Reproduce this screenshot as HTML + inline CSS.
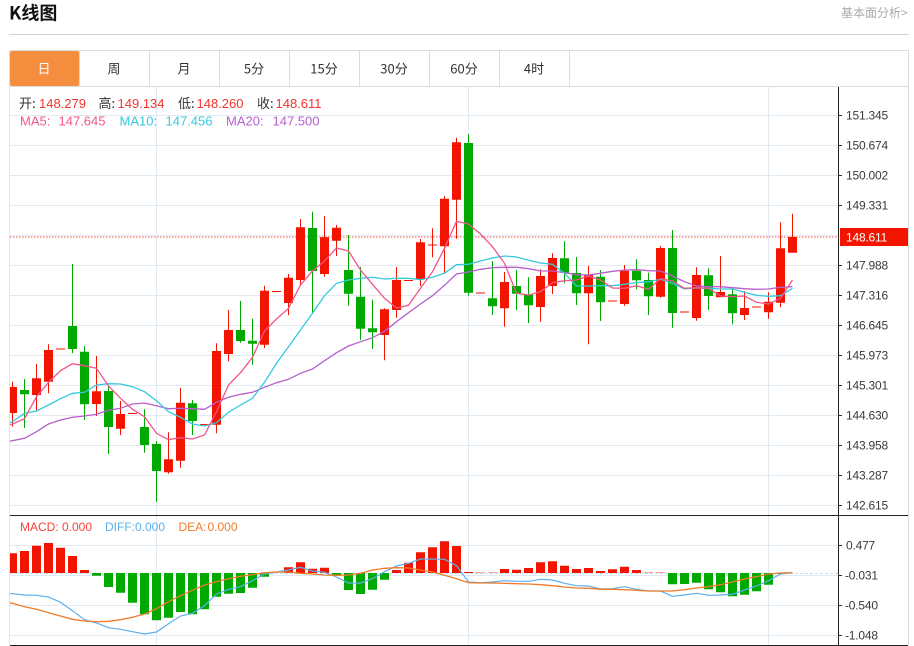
<!DOCTYPE html>
<html><head><meta charset="utf-8"><title>K线图</title>
<style>
html,body{margin:0;padding:0;background:#fff;width:914px;height:646px;overflow:hidden}
svg{display:block}
text{font-family:"Liberation Sans","Noto Sans CJK SC",sans-serif;font-size:13px}
.cjk{font-family:"Noto Sans CJK SC","Liberation Sans",sans-serif}
.ax text{font-size:12px;letter-spacing:-.2px;fill:#3a3a3a}
.m text{font-size:12px}
.l{fill:#333}.r{fill:#f4332b}
</style></head><body>
<svg width="914" height="646" viewBox="0 0 914 646" xmlns="http://www.w3.org/2000/svg">
<defs><clipPath id="c"><rect x="10" y="87" width="828" height="558"/></clipPath></defs>
<text x="9" y="19.5" class="cjk" style="font-size:18px;font-weight:700" fill="#111">K线图</text>
<text x="841" y="17" class="cjk" style="font-size:12px" fill="#a9a9a9">基本面分析&gt;</text>
<rect x="9" y="34" width="900" height="1" fill="#d2d2d2"/>
<!-- tabs -->
<path d="M9.5 50.5H908.5M9.5 86.5H908.5M9.5 50V645M908.5 50V645M149.5 50V86M219.5 50V86M289.5 50V86M359.5 50V86M429.5 50V86M499.5 50V86M569.5 50V86M79.5 50V86" stroke="#dcdcdc" fill="none"/>
<rect x="10" y="51" width="69" height="35" rx="2" fill="#f58d3f"/>
<g class="cjk" text-anchor="middle" fill="#333" style="font-size:13px">
<text x="44" y="73.7" class="cjk" fill="#fff">日</text>
<text x="114" y="73.7" class="cjk">周</text>
<text x="184" y="73.7" class="cjk">月</text>
<text x="254" y="73.7" class="cjk">5分</text>
<text x="324" y="73.7" class="cjk">15分</text>
<text x="394" y="73.7" class="cjk">30分</text>
<text x="464" y="73.7" class="cjk">60分</text>
<text x="534" y="73.7" class="cjk">4时</text>
</g>
<!-- grid -->
<path d="M10 115.5H838M10 145.5H838M10 175.5H838M10 205.5H838M10 235.5H838M10 265.5H838M10 295.5H838M10 325.5H838M10 355.5H838M10 385.5H838M10 415.5H838M10 445.5H838M10 475.5H838M10 505.5H838M10 545.5H838M10 575.5H838M10 605.5H838M10 635.5H838M156.5 87V645M468.5 87V645M768.5 87V645" stroke="#e1eaf2" fill="none"/>
<path d="M9.5 87V645" stroke="#dde5ec" fill="none"/>
<g clip-path="url(#c)">
<path d="M10 237H838" stroke="#f31400" stroke-opacity=".75" stroke-dasharray="1.5 1.5" fill="none"/>
<!-- red candles -->
<path fill="#f31400" d="M8 387h9V413h-9zM12 381.7h1V426.7h-1zM32 378.3h9V395h-9zM36 364h1V410.7h-1zM44 350h9V381.7h-9zM48 344.3h1V393.3h-1zM92 391.3h9V404h-9zM96 356h1V416h-1zM116 414h9V428.7h-9zM120 401h1V435h-1zM128 413h9V414h-9zM164 459.3h9V472.3h-9zM168 432.3h1V473.7h-1zM176 402.7h9V460.7h-9zM180 388h1V467.7h-1zM200 424h9V425h-9zM212 351h9V424.7h-9zM216 343.3h1V433.3h-1zM224 330h9V354h-9zM228 310h1V361.3h-1zM260 290.7h9V344.7h-9zM264 285.7h1V348h-1zM272 291h9V292h-9zM284 277.7h9V303h-9zM288 274h1V315.3h-1zM296 227.3h9V280h-9zM300 219h1V285h-1zM320 237.3h9V274h-9zM324 216h1V276.7h-1zM332 227.7h9V240.7h-9zM336 225h1V256h-1zM380 309.3h9V335h-9zM384 308.3h1V360.3h-1zM392 280h9V310h-9zM396 267h1V317.7h-1zM404 280h9V281h-9zM416 242.3h9V279h-9zM420 239h1V286h-1zM428 244.5h9V245.5h-9zM432 228.3h1V257.3h-1zM440 198.7h9V246.3h-9zM444 196h1V272.7h-1zM452 142.3h9V199.7h-9zM456 137.7h1V238.7h-1zM500 282h9V308.3h-9zM504 272h1V326.7h-1zM536 276h9V307h-9zM540 269.3h1V321.7h-1zM548 258h9V286h-9zM552 253.3h1V294h-1zM584 275h9V293.3h-9zM588 266h1V344.3h-1zM608 300.5h9V301.5h-9zM620 270.7h9V304h-9zM624 265h1V305.7h-1zM656 248h9V296.7h-9zM660 246h1V297.7h-1zM680 311.5h9V312.5h-9zM692 275h9V318h-9zM696 267.3h1V320.7h-1zM716 292h9V297.3h-9zM720 256h1V297.3h-1zM740 308h9V315h-9zM744 291.3h1V320h-1zM752 306.5h9V307.5h-9zM764 301.7h9V312.3h-9zM768 292.3h1V318.7h-1zM776 248.3h9V302.7h-9zM780 222.3h1V307.3h-1zM788 237h9V252.7h-9zM792 213.7h1V237h-1z"/>
<path fill="#f31400" fill-opacity=".5" d="M56 348h9v2h-9zM476 292h9v2h-9z"/>
<!-- green candles -->
<path fill="#00a800" d="M20 390h9V394.3h-9zM24 379h1V428h-1zM68 326h9V349h-9zM72 264h1V353.3h-1zM80 351.7h9V404.3h-9zM84 346h1V420h-1zM104 391h9V427h-9zM108 386.7h1V454h-1zM140 427h9V445h-9zM144 409.3h1V452.7h-1zM152 444h9V471h-9zM156 441h1V501.7h-1zM188 403.3h9V421h-9zM192 400h1V435h-1zM236 330h9V341h-9zM240 301h1V342.7h-1zM248 340.7h9V343.7h-9zM252 318.7h1V364.7h-1zM308 228h9V271h-9zM312 211.7h1V313.3h-1zM344 270h9V293.7h-9zM348 235h1V305.7h-1zM356 296.7h9V328.7h-9zM360 267h1V340h-1zM368 328.3h9V332.3h-9zM372 299.7h1V349h-1zM464 143h9V292.7h-9zM468 134h1V295.7h-1zM488 298.3h9V306.3h-9zM492 261h1V315h-1zM512 286h9V293.7h-9zM516 269.7h1V310.3h-1zM524 294.7h9V305.3h-9zM528 277.3h1V323h-1zM560 258.3h9V272.7h-9zM564 241.3h1V283.3h-1zM572 273h9V293.3h-9zM576 257h1V305h-1zM596 276.7h9V302.3h-9zM600 270h1V321h-1zM632 270.7h9V280.3h-9zM636 259.3h1V289.3h-1zM644 280h9V296.3h-9zM648 272.7h1V315h-1zM668 248h9V313h-9zM672 230h1V327.7h-1zM704 275.3h9V296h-9zM708 268.3h1V310h-1zM728 294.3h9V313.3h-9zM732 287.3h1V324.3h-1z"/>
<!-- MA lines -->
<polyline fill="none" stroke="#b75fce" stroke-width="1.3" points="0.5 443 12.5 440.7 24.5 438.3 36.5 431.7 48.5 424 60.5 420 72.5 417.3 84.5 416 96.5 414.3 108.5 410.3 120.5 408.3 132.5 404 144.5 403 156.5 405.7 168.5 408.7 180.5 408.3 192.5 408.7 204.5 409.3 216.5 402.3 228.5 397.3 240.5 394.3 252.5 392.3 264.5 387.3 276.5 382.7 288.5 379.3 300.5 373.3 312.5 369 324.5 360.7 336.5 352.7 348.5 346 360.5 341.7 372.5 337.7 384.5 331.3 396.5 321.7 408.5 312.7 420.5 304 432.5 295.7 444.5 285.3 456.5 274 468.5 272 480.5 269.3 492.5 267.7 504.5 267.3 516.5 267.3 528.5 268.7 540.5 271 552.5 271 564.5 272.7 576.5 274.7 588.5 275 600.5 273.3 612.5 271.3 624.5 270 636.5 269.7 648.5 270.7 660.5 271 672.5 276 684.5 281.7 696.5 286 708.5 286.7 720.5 286.7 732.5 287.7 744.5 288.7 756.5 289.3 768.5 289 780.5 287.3 792.5 286.7"/>
<polyline fill="none" stroke="#37c9de" stroke-width="1.3" points="0.5 426 12.5 421.7 24.5 413.3 36.5 411 48.5 405 60.5 398.7 72.5 393.3 84.5 392.3 96.5 385 108.5 383.7 120.5 384 132.5 386.7 144.5 391.7 156.5 400.7 168.5 411.7 180.5 417.3 192.5 424 204.5 426 216.5 422.7 228.5 412.3 240.5 405 252.5 398.3 264.5 382.3 276.5 363.3 288.5 346.7 300.5 330 312.5 313.3 324.5 295.7 336.5 283.3 348.5 280 360.5 278.3 372.5 277.3 384.5 279 396.5 278.3 408.5 278.3 420.5 279.7 432.5 277.3 444.5 273.3 456.5 264.7 468.5 264.3 480.5 261 492.5 258 504.5 256 516.5 257 528.5 260.3 540.5 263 552.5 264.3 564.5 273.3 576.5 286 588.5 286 600.5 285.7 612.5 285.7 624.5 284.3 636.5 282.7 648.5 281.7 660.5 279.3 672.5 283.3 684.5 289 696.5 288 708.5 288.3 720.5 289 732.5 289 744.5 292.3 756.5 295.3 768.5 296.3 780.5 295.7 792.5 288.3"/>
<polyline fill="none" stroke="#f0568c" stroke-width="1.3" points="0.5 427 12.5 424 24.5 418.7 36.5 396.7 48.5 382.3 60.5 370.7 72.5 363.7 84.5 365.7 96.5 368.3 108.5 386 120.5 398.3 132.5 409.3 144.5 416.7 156.5 433.3 168.5 439.7 180.5 437.7 192.5 439 204.5 435 216.5 411.7 228.5 385 240.5 372.7 252.5 357.3 264.5 331 276.5 319 288.5 308.3 300.5 285 312.5 271 324.5 261 336.5 248 348.5 251 360.5 270 372.5 284.3 384.5 298.3 396.5 308 408.5 305.3 420.5 288.3 432.5 271.7 444.5 248.3 456.5 221.3 468.5 224 480.5 234 492.5 246.7 504.5 263.3 516.5 293.3 528.5 295 540.5 291.7 552.5 282.7 564.5 280.7 576.5 280 588.5 276 600.5 280 612.5 288 624.5 288.3 636.5 285.7 648.5 289.3 660.5 278.7 672.5 281 684.5 288.3 696.5 287.7 708.5 288.3 720.5 296 732.5 296.7 744.5 296 756.5 302.3 768.5 304 780.5 298.3 792.5 280"/>
<!-- MACD -->
<path d="M10 573.5H838" stroke="#bfe3f2" stroke-dasharray="3 2" fill="none"/>
<path fill="#f31400" d="M8 553.3h9V573h-9zM20 551h9V573h-9zM32 545.7h9V573h-9zM44 543h9V573h-9zM56 547.7h9V573h-9zM68 556h9V573h-9zM80 570h9V573h-9zM284 567.3h9V573h-9zM296 562.3h9V573h-9zM308 568.7h9V573h-9zM320 567.7h9V573h-9zM392 570h9V573h-9zM404 562.7h9V573h-9zM416 552.3h9V573h-9zM428 547.3h9V573h-9zM440 541.3h9V573h-9zM452 546h9V573h-9zM464 572h9V573h-9zM500 569h9V573h-9zM512 569.7h9V573h-9zM524 568h9V573h-9zM536 562.3h9V573h-9zM548 561.3h9V573h-9zM560 565.7h9V573h-9zM572 569h9V573h-9zM584 568h9V573h-9zM596 571h9V573h-9zM608 569.3h9V573h-9zM620 566.7h9V573h-9zM632 570h9V573h-9z"/>
<path fill="#f31400" fill-opacity=".4" d="M476 572h9v1h-9zM488 572h9v1h-9zM644 572h9v1h-9zM656 572h9v1h-9z"/>
<path fill="#00a800" d="M92 573h9V575.7h-9zM104 573h9V587h-9zM116 573h9V592.7h-9zM128 573h9V602.7h-9zM140 573h9V614.3h-9zM152 573h9V620.3h-9zM164 573h9V617.7h-9zM176 573h9V612h-9zM188 573h9V614.3h-9zM200 573h9V609.3h-9zM212 573h9V596.7h-9zM224 573h9V593.7h-9zM236 573h9V593h-9zM248 573h9V587.7h-9zM260 573h9V576.7h-9zM332 573h9V575h-9zM344 573h9V590h-9zM356 573h9V594h-9zM368 573h9V589.7h-9zM380 573h9V579.7h-9zM668 573h9V584.3h-9zM680 573h9V584h-9zM692 573h9V582.7h-9zM704 573h9V589.3h-9zM716 573h9V592.3h-9zM728 573h9V596.3h-9zM740 573h9V594.7h-9zM752 573h9V591.3h-9zM764 573h9V584.7h-9zM776 573h9V574h-9z"/>
<polyline fill="none" stroke="#5cb0f0" stroke-width="1.2" points="0.5 593 12.5 593.7 24.5 595 36.5 595.3 48.5 597 60.5 602.3 72.5 610.7 84.5 619.7 96.5 623 108.5 627.7 120.5 629.3 132.5 631.7 144.5 634 156.5 632 168.5 623.7 180.5 616 192.5 613.3 204.5 605.7 216.5 594 228.5 589.3 240.5 586.7 252.5 580.7 264.5 574 276.5 572 288.5 570 300.5 567.3 312.5 571 324.5 572.3 336.5 577 348.5 583 360.5 583 372.5 578.7 384.5 571.7 396.5 566 408.5 563.3 420.5 559 432.5 559 444.5 559.3 456.5 565.7 468.5 582 480.5 582.7 492.5 582 504.5 580.7 516.5 581.3 528.5 581.3 540.5 579.3 552.5 580 564.5 583.3 576.5 585.7 588.5 586 600.5 589 612.5 588.7 624.5 586.7 636.5 589.3 648.5 591 660.5 591 672.5 596.3 684.5 595 696.5 593.3 708.5 595.3 720.5 595 732.5 594.3 744.5 590 756.5 586 768.5 580.7 780.5 574 792.5 572.7"/>
<polyline fill="none" stroke="#f07b2a" stroke-width="1.3" points="0.5 601 12.5 603.3 24.5 606.7 36.5 609.3 48.5 612.7 60.5 616 72.5 619.3 84.5 621 96.5 621.7 108.5 621.3 120.5 619.7 132.5 617.3 144.5 614 156.5 608.7 168.5 601.7 180.5 595.7 192.5 590.3 204.5 585 216.5 581.7 228.5 578.7 240.5 576.3 252.5 574.7 264.5 572.7 276.5 572 288.5 572 300.5 573.3 312.5 574 324.5 575 336.5 575.3 348.5 575 360.5 573.3 372.5 570 384.5 568.3 396.5 567.7 408.5 568 420.5 570 432.5 572 444.5 575.3 456.5 578.7 468.5 582.7 480.5 583 492.5 583 504.5 583.3 516.5 583.7 528.5 584 540.5 584.7 552.5 585.7 564.5 587 576.5 588 588.5 588.3 600.5 589.3 612.5 589.3 624.5 589.7 636.5 590.3 648.5 591 660.5 591 672.5 591 684.5 589.7 696.5 588 708.5 586.7 720.5 584.7 732.5 582 744.5 579 756.5 576.7 768.5 574 780.5 573 792.5 572.7"/>
</g>
<!-- frame lines -->
<path d="M10 515.5H908M10 645.5H908M838.5 87V646" stroke="#222" fill="none"/>
<!-- ticks -->
<path d="M838 115.5h4M838 145.5h4M838 175.5h4M838 205.5h4M838 265.5h4M838 295.5h4M838 325.5h4M838 355.5h4M838 385.5h4M838 415.5h4M838 445.5h4M838 475.5h4M838 505.5h4M838 545.5h4M838 575.5h4M838 605.5h4M838 635.5h4" stroke="#333" fill="none"/>
<g class="ax">
<text x="846" y="119.5">151.345</text>
<text x="846" y="149.5">150.674</text>
<text x="846" y="179.5">150.002</text>
<text x="846" y="209.5">149.331</text>
<text x="846" y="269.5">147.988</text>
<text x="846" y="299.5">147.316</text>
<text x="846" y="329.5">146.645</text>
<text x="846" y="359.5">145.973</text>
<text x="846" y="389.5">145.301</text>
<text x="846" y="419.5">144.630</text>
<text x="846" y="449.5">143.958</text>
<text x="846" y="479.5">143.287</text>
<text x="846" y="509.5">142.615</text>
<text x="846" y="549.5">0.477</text>
<text x="845" y="579.5">-0.031</text>
<text x="845" y="609.5">-0.540</text>
<text x="845" y="639.5">-1.048</text>
</g>
<rect x="840" y="228" width="68" height="18" fill="#f31400"/>
<text x="846" y="241.5" style="font-size:12px;letter-spacing:-.2px" fill="#fff">148.611</text>
<!-- OHLC -->
<text x="19" y="108" class="l cjk">开:</text><text x="39" y="108" class="r">148.279</text>
<text x="98.5" y="108" class="l cjk">高:</text><text x="117.5" y="108" class="r">149.134</text>
<text x="178" y="108" class="l cjk">低:</text><text x="196.5" y="108" class="r">148.260</text>
<text x="257" y="108" class="l cjk">收:</text><text x="275.5" y="108" class="r">148.611</text>
<text x="20" y="125.7" fill="#f0568c">MA5:</text><text x="58.5" y="125.7" fill="#f0568c">147.645</text>
<text x="119.5" y="125.7" fill="#37c9de">MA10:</text><text x="165.5" y="125.7" fill="#37c9de">147.456</text>
<text x="226" y="125.7" fill="#b75fce">MA20:</text><text x="272.5" y="125.7" fill="#b75fce">147.500</text>
<g class="m">
<text x="20" y="531" fill="#f4433b">MACD:</text><text x="62" y="531" fill="#f4433b">0.000</text>
<text x="105" y="531" fill="#5cb0f0">DIFF:</text><text x="135" y="531" fill="#5cb0f0">0.000</text>
<text x="178.5" y="531" fill="#f07b2a">DEA:</text><text x="207.5" y="531" fill="#f07b2a">0.000</text>
</g>
</svg>
</body></html>
